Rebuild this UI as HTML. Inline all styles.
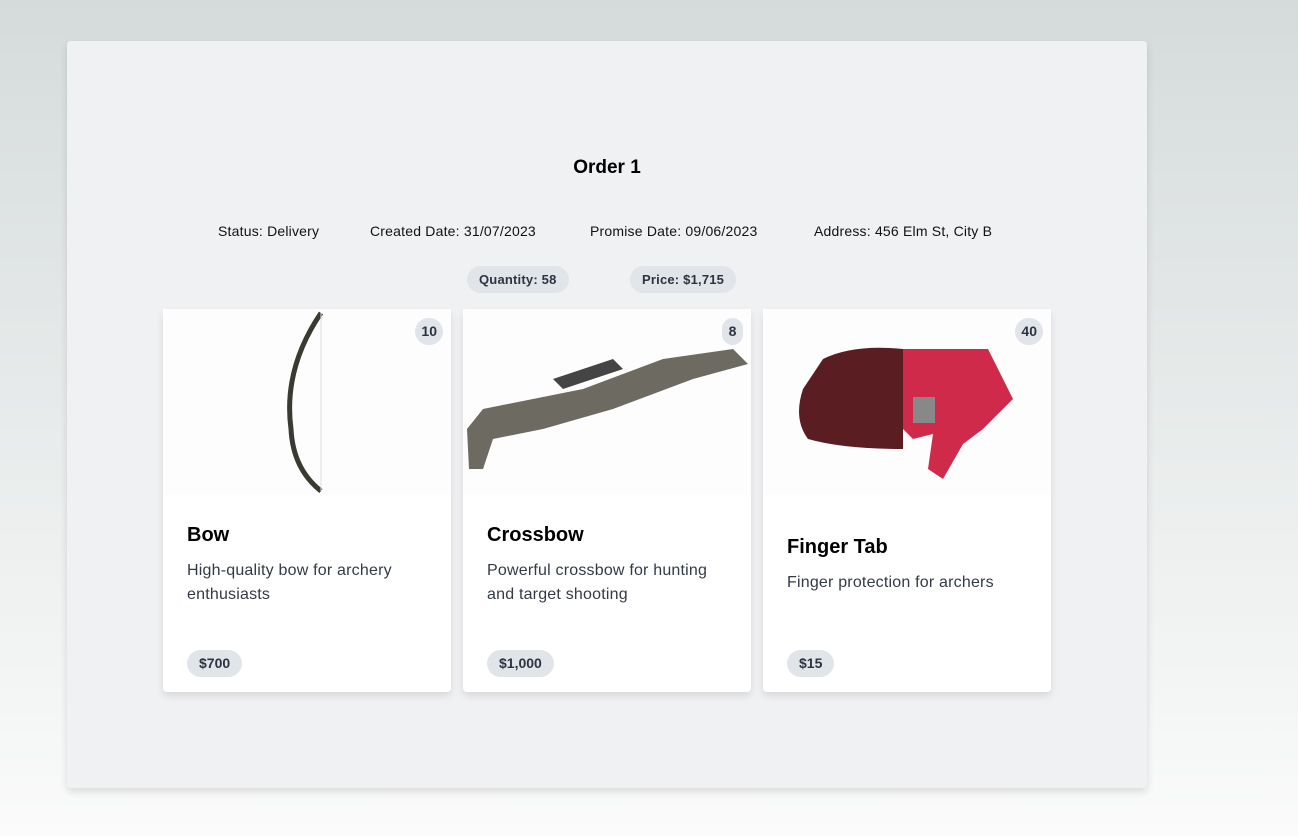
<!DOCTYPE html>
<html><head><style>
*{margin:0;padding:0;box-sizing:border-box}
body{width:1298px;height:836px;background:linear-gradient(#d5dbdb,#fafbfa);font-family:"Liberation Sans",sans-serif;position:relative;overflow:hidden}
.panel{position:absolute;left:67px;top:41px;width:1080px;height:747px;background:#f0f1f3;border-radius:4px;box-shadow:0 4px 8px rgba(0,0,0,.12)}
.t{position:absolute;left:0;width:1080px;text-align:center;top:116px;font-size:19px;font-weight:bold;color:#000}
.m{position:absolute;top:182px;font-size:14px;color:#111;letter-spacing:0.2px}
.pill{position:absolute;background:#e1e4e8;border-radius:14px;font-size:13px;font-weight:bold;color:#2d3340;height:27px;line-height:27px;padding:0 12px;letter-spacing:0.2px}
.card{position:absolute;top:268px;width:288px;height:383px;background:#fff;border-radius:4px;box-shadow:0 4px 8px rgba(0,0,0,.1)}
.img{height:186px;position:relative;background:#fdfdfd}
.badge{position:absolute;top:9px;right:8px;height:27px;min-width:21px;padding:0 6px;border-radius:14px;background:#e1e4e8;font-size:14px;font-weight:bold;color:#2d3340;line-height:27px;text-align:center}
.body{position:absolute;left:24px;right:20px}
h3{font-size:20px;font-weight:bold;color:#000;margin-bottom:12px}
p{font-size:16px;line-height:24px;color:#333a47;letter-spacing:0.2px}
.price{position:absolute;left:24px;top:341px;height:27px;line-height:27px;padding:0 12px;border-radius:14px;background:#e1e4e8;font-size:14px;font-weight:bold;color:#2d3340}
</style></head><body>
<div class="panel">
<div class="t">Order 1</div>
<div class="m" style="left:151px">Status: Delivery</div>
<div class="m" style="left:303px">Created Date: 31/07/2023</div>
<div class="m" style="left:523px">Promise Date: 09/06/2023</div>
<div class="m" style="left:747px">Address: 456 Elm St, City B</div>
<div class="pill" style="left:400px;top:225px">Quantity: 58</div>
<div class="pill" style="left:563px;top:225px">Price: $1,715</div>

<div class="card" style="left:96px">
<div class="img"><svg width="288" height="186"><path d="M158 4 Q120 60 128 120 Q130 160 158 182" stroke="#3a3a32" stroke-width="5" fill="none"/><line x1="158" y1="4" x2="158" y2="182" stroke="#ddd" stroke-width="1"/></svg><div class="badge">10</div></div>
<div class="body" style="top:215px"><h3>Bow</h3><p>High-quality bow for archery enthusiasts</p></div>
<div class="price">$700</div></div>

<div class="card" style="left:396px">
<div class="img"><svg width="288" height="186"><path d="M4 120 L20 100 L120 80 L200 50 L270 40 L285 55 L230 70 L150 100 L80 120 L30 130 L20 160 L6 160 Z" fill="#6d6a62"/><path d="M90 70 L150 50 L160 60 L100 80Z" fill="#444"/></svg><div class="badge">8</div></div>
<div class="body" style="top:215px"><h3>Crossbow</h3><p>Powerful crossbow for hunting and target shooting</p></div>
<div class="price">$1,000</div></div>

<div class="card" style="left:696px">
<div class="img"><svg width="288" height="186"><path d="M60 50 Q90 35 140 40 L140 140 Q80 140 45 130 Q30 110 40 80 Z" fill="#5a1e22"/><path d="M140 40 L225 40 L250 90 L220 120 L200 135 L180 170 L165 160 L170 125 L150 130 L140 120 Z" fill="#d02a4a"/><rect x="150" y="88" width="22" height="26" fill="#888"/></svg><div class="badge">40</div></div>
<div class="body" style="top:227px"><h3>Finger Tab</h3><p>Finger protection for archers</p></div>
<div class="price">$15</div></div>
</div>
</body></html>
